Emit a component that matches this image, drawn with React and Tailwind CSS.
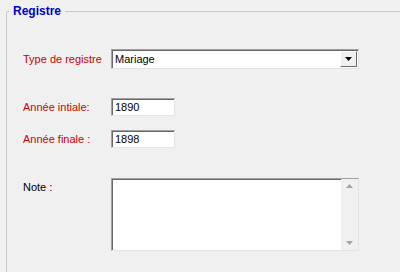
import React from 'react';

const sunken = "bg-white border border-t-[#a0a0a0] border-l-[#a0a0a0] border-b-[#e3e3e3] border-r-[#e3e3e3] shadow-[inset_1px_1px_0_#696969]";

const Label = ({ children, red = true }) => (
  <span className={`w-[88px] shrink-0 ${red ? 'text-[#cc0000]' : 'text-black'}`}>{children}</span>
);

export default function App() {
  return (
    <div className="w-[400px] h-[272px] bg-[#f0f0f0] overflow-hidden text-[11px] leading-[13px] font-['Liberation_Sans',Arial,sans-serif]">
      <fieldset className="ml-[6px] mt-[4px] w-[420px] h-[300px] border border-[#c8c8c8] rounded-[2px]">
        <legend className="ml-[2px] px-[4px] -mb-[1px] text-[12px] leading-[15px] font-bold text-[#0000c8]">Registre</legend>

        <div className="pl-[16px]">
          <div className="flex items-center mt-[31px]">
            <Label>Type de registre</Label>
            <div className={`w-[248px] h-[20px] flex items-center ${sunken}`}>
              <span className="pl-[3px] flex-1 pt-[1px]">Mariage</span>
              <div className="w-[17px] h-[16px] mr-[1px] bg-[#f0f0f0] border border-t-white border-l-white border-b-[#696969] border-r-[#696969] flex items-center justify-center">
                <svg width="7" height="4" viewBox="0 0 7 4"><path d="M0 0h7L3.5 4z" fill="#000" /></svg>
              </div>
            </div>
          </div>

          <div className="flex items-center mt-[29px]">
            <Label>Année intiale:</Label>
            <div className={`w-[64px] h-[18px] flex items-center pl-[3px] ${sunken}`}>1890</div>
          </div>

          <div className="flex items-center mt-[14px]">
            <Label>Année finale :</Label>
            <div className={`w-[64px] h-[18px] flex items-center pl-[3px] ${sunken}`}>1898</div>
          </div>

          <div className="flex items-start mt-[30px]">
            <Label red={false}><span className="block pt-[3px]">Note :</span></Label>
            <div className={`w-[248px] h-[73px] flex justify-end ${sunken}`}>
              <div className="w-[17px] h-full bg-[#f0f0f0] flex flex-col items-center justify-between py-[5px]">
                <svg width="7" height="4" viewBox="0 0 7 4"><path d="M3.5 0L7 4H0z" fill="#a3a3a3" /></svg>
                <svg width="7" height="4" viewBox="0 0 7 4"><path d="M0 0h7L3.5 4z" fill="#a3a3a3" /></svg>
              </div>
            </div>
          </div>
        </div>
      </fieldset>
    </div>
  );
}
